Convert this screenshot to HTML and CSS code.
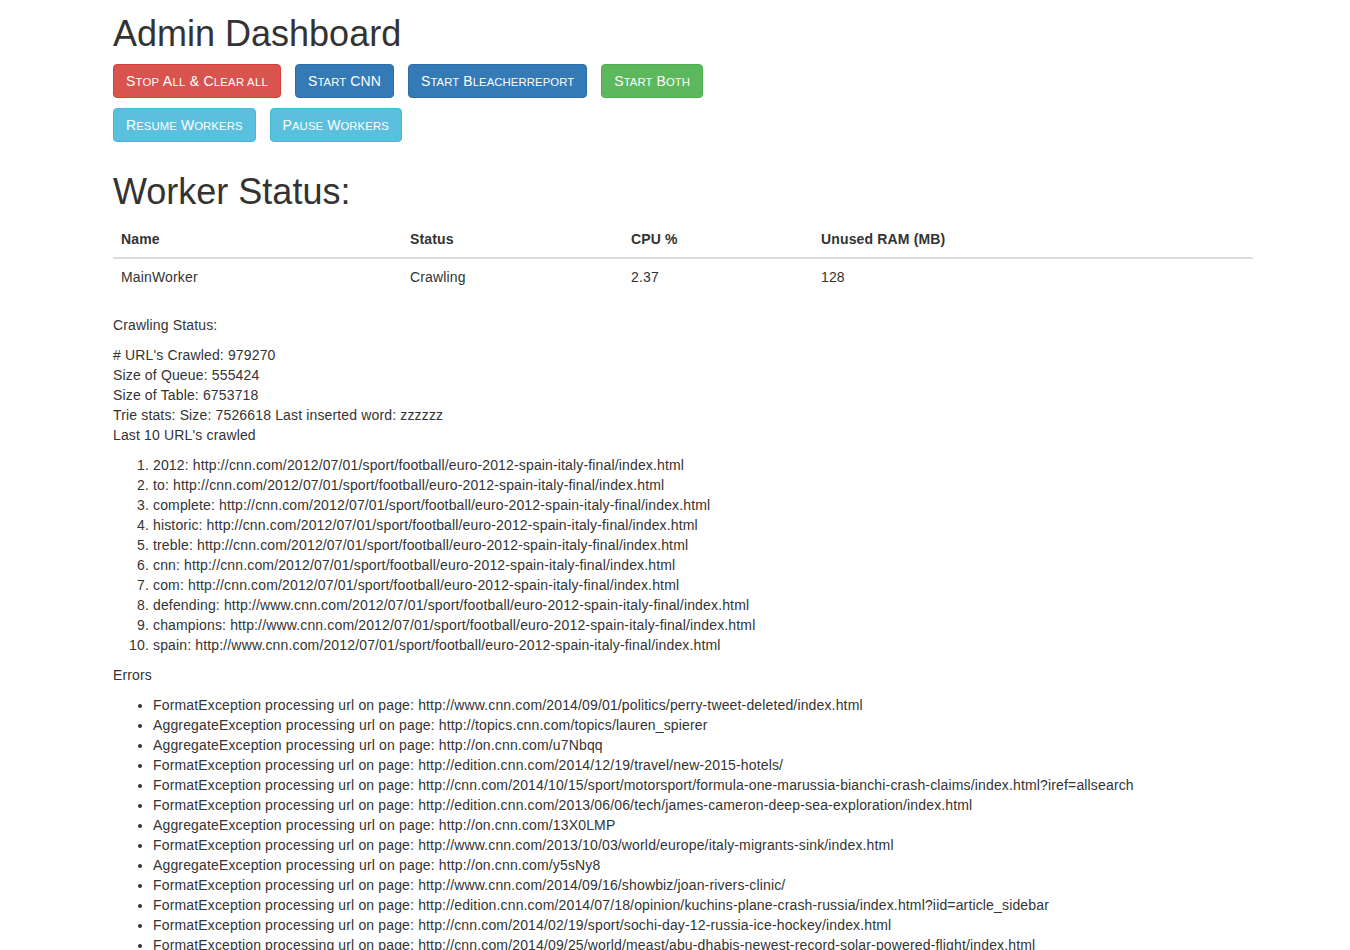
FILE: index.html
```html
<!DOCTYPE html>
<html>
<head>
<meta charset="utf-8">
<title>Admin Dashboard</title>
<link rel="stylesheet" href="styles.css">
</head>
<body>
<div class="container">
  <h1 class="title-first">Admin Dashboard</h1>
  <div class="btn-row">
    <button class="btn btn-danger">S<span class="lc">top</span> A<span class="lc">ll</span> &amp; C<span class="lc">lear all</span></button>
    <button class="btn btn-primary">S<span class="lc">tart</span> CNN</button>
    <button class="btn btn-primary">S<span class="lc">tart</span> B<span class="lc">leacherreport</span></button>
    <button class="btn btn-success">S<span class="lc">tart</span> B<span class="lc">oth</span></button>
  </div>
  <div class="btn-row">
    <button class="btn btn-info">R<span class="lc">esume</span> W<span class="lc">orkers</span></button>
    <button class="btn btn-info">P<span class="lc">ause</span> W<span class="lc">orkers</span></button>
  </div>

  <h1 class="title-second">Worker Status:</h1>
  <table class="table">
    <thead>
      <tr>
        <th class="c-name">Name</th>
        <th class="c-status">Status</th>
        <th class="c-cpu">CPU %</th>
        <th>Unused RAM (MB)</th>
      </tr>
    </thead>
    <tbody>
      <tr>
        <td>MainWorker</td>
        <td>Crawling</td>
        <td>2.37</td>
        <td>128</td>
      </tr>
    </tbody>
  </table>

  <p>Crawling Status:</p>
  <p># URL's Crawled: 979270<br>Size of Queue: 555424<br>Size of Table: 6753718<br>Trie stats: Size: 7526618 Last inserted word: zzzzzz<br>Last 10 URL's crawled</p>
  <ol>
    <li>2012: http://cnn.com/2012/07/01/sport/football/euro-2012-spain-italy-final/index.html</li>
    <li>to: http://cnn.com/2012/07/01/sport/football/euro-2012-spain-italy-final/index.html</li>
    <li>complete: http://cnn.com/2012/07/01/sport/football/euro-2012-spain-italy-final/index.html</li>
    <li>historic: http://cnn.com/2012/07/01/sport/football/euro-2012-spain-italy-final/index.html</li>
    <li>treble: http://cnn.com/2012/07/01/sport/football/euro-2012-spain-italy-final/index.html</li>
    <li>cnn: http://cnn.com/2012/07/01/sport/football/euro-2012-spain-italy-final/index.html</li>
    <li>com: http://cnn.com/2012/07/01/sport/football/euro-2012-spain-italy-final/index.html</li>
    <li>defending: http://www.cnn.com/2012/07/01/sport/football/euro-2012-spain-italy-final/index.html</li>
    <li>champions: http://www.cnn.com/2012/07/01/sport/football/euro-2012-spain-italy-final/index.html</li>
    <li>spain: http://www.cnn.com/2012/07/01/sport/football/euro-2012-spain-italy-final/index.html</li>
  </ol>
  <p>Errors</p>
  <ul>
    <li>FormatException processing url on page: http://www.cnn.com/2014/09/01/politics/perry-tweet-deleted/index.html</li>
    <li>AggregateException processing url on page: http://topics.cnn.com/topics/lauren_spierer</li>
    <li>AggregateException processing url on page: http://on.cnn.com/u7Nbqq</li>
    <li>FormatException processing url on page: http://edition.cnn.com/2014/12/19/travel/new-2015-hotels/</li>
    <li>FormatException processing url on page: http://cnn.com/2014/10/15/sport/motorsport/formula-one-marussia-bianchi-crash-claims/index.html?iref=allsearch</li>
    <li>FormatException processing url on page: http://edition.cnn.com/2013/06/06/tech/james-cameron-deep-sea-exploration/index.html</li>
    <li>AggregateException processing url on page: http://on.cnn.com/13X0LMP</li>
    <li>FormatException processing url on page: http://www.cnn.com/2013/10/03/world/europe/italy-migrants-sink/index.html</li>
    <li>AggregateException processing url on page: http://on.cnn.com/y5sNy8</li>
    <li>FormatException processing url on page: http://www.cnn.com/2014/09/16/showbiz/joan-rivers-clinic/</li>
    <li>FormatException processing url on page: http://edition.cnn.com/2014/07/18/opinion/kuchins-plane-crash-russia/index.html?iid=article_sidebar</li>
    <li>FormatException processing url on page: http://cnn.com/2014/02/19/sport/sochi-day-12-russia-ice-hockey/index.html</li>
    <li>FormatException processing url on page: http://cnn.com/2014/09/25/world/meast/abu-dhabis-newest-record-solar-powered-flight/index.html</li>
  </ul>
</div>
</body>
</html>
```
FILE: styles.css
```css
html, body {
  margin: 0;
  padding: 0;
  background: #fff;
}
body {
  font-family: "Liberation Sans", Arial, sans-serif;
  font-size: 14px;
  line-height: 20px;
  color: #333;
  letter-spacing: 0.15px;
}
.container {
  width: 1140px;
  margin-left: 113px;
}
h1 {
  font-family: "Liberation Sans", Arial, sans-serif;
  font-size: 36px;
  font-weight: 500;
  line-height: 1.1;
  margin: 20px 0 10px;
  color: #333;
  letter-spacing: 0;
}
h1.title-first {
  margin-top: 14px;
}
h1.title-second {
  margin-top: 30px;
}
.btn-row {
  display: flex;
  gap: 14px;
  margin-bottom: 10px;
}
.btn {
  display: inline-block;
  height: 34px;
  font-family: "Liberation Sans", Arial, sans-serif;
  font-size: 14px;
  line-height: 20px;
  letter-spacing: 0.1px;
  padding: 6px 12px;
  border: 1px solid transparent;
  border-radius: 4px;
  color: #fff;
  cursor: pointer;
  white-space: nowrap;
}
.btn .lc {
  text-transform: uppercase;
  font-size: 11.3px;
  line-height: 1;
}
.btn-danger { background: #d9534f; border-color: #d43f3a; letter-spacing: 0.26px; }
.btn-primary { background: #337ab7; border-color: #2e6da4; }
.btn-success { background: #5cb85c; border-color: #4cae4c; }
.btn-info { background: #5bc0de; border-color: #46b8da; }

.table {
  width: 100%;
  border-collapse: collapse;
  border-spacing: 0;
  margin-bottom: 20px;
}
.table th, .table td {
  padding: 8px;
  text-align: left;
  vertical-align: top;
  line-height: 20px;
}
.table th {
  font-weight: bold;
  border-bottom: 2px solid #ddd;
}
.table td {
  border-top: 1px solid #ddd;
}
.c-name { width: 273px; }
.c-status { width: 205px; }
.c-cpu { width: 174px; }

p {
  margin: 0 0 10px;
}
ol, ul {
  margin: 0 0 10px;
  padding-left: 40px;
}
```
